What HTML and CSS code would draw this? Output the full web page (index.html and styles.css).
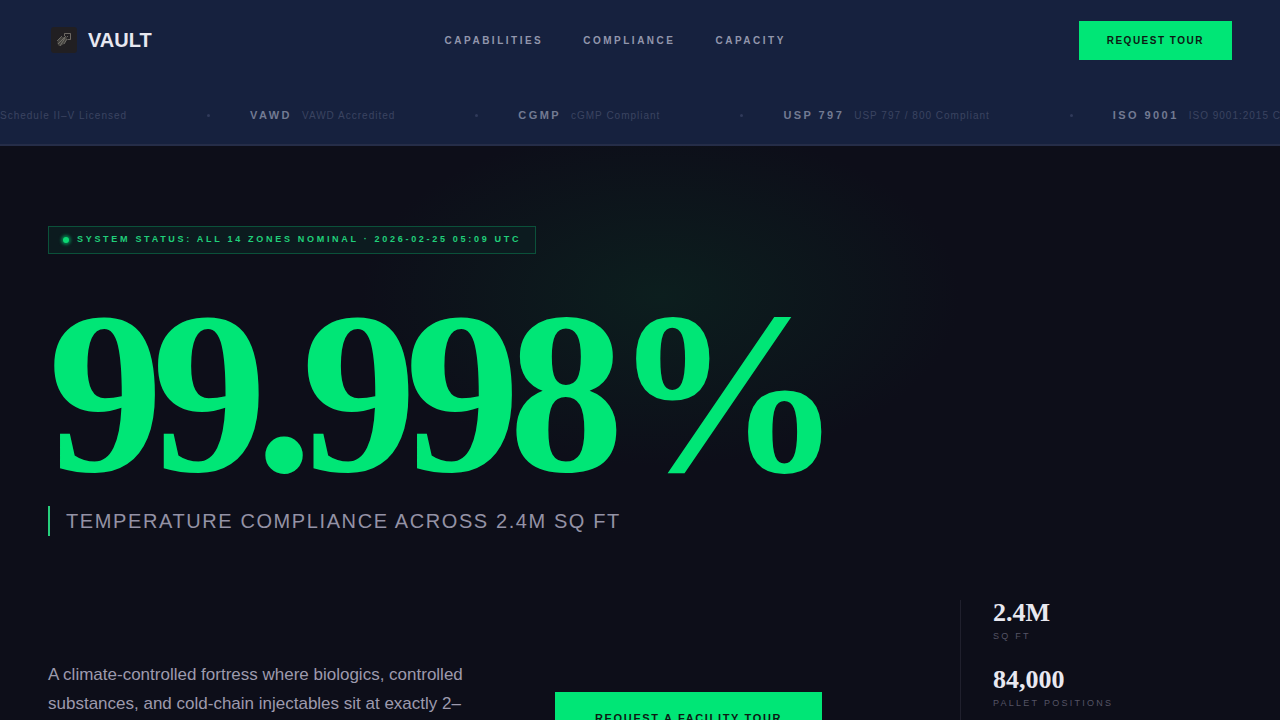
FILE: index.html
```html
<!DOCTYPE html>
<html lang="en">
<head>
<meta charset="utf-8">
<meta name="viewport" content="width=device-width, initial-scale=1">
<title>VAULT</title>
<link rel="stylesheet" href="styles.css">
</head>
<body>
<header class="site-header">
  <div class="topbar">
    <a class="brand" href="#">
      <svg class="brand-mark" viewBox="0 0 28 28" aria-hidden="true">
        <rect x="1" y="1" width="26" height="26" rx="3" fill="#211f22"/>
        <path d="M7.500 18C7 13 11 9.500 17 11C17 16 13 20 9 20Z" fill="#45433f"/>
        <g fill="none" stroke="#85817a">
          <path d="M14.500 10v-2.500h6v6h-3" opacity=".75"/>
          <path d="M17.500 10v1" opacity=".7"/>
          <path d="M7 15l5-5M8 18l8-8M10 20l5-8M14 18l3-5" opacity=".7"/>
        </g>
      </svg>
      <span>VAULT</span>
    </a>
    <nav class="links" aria-label="Main">
      <a href="#">CAPABILITIES</a>
      <a href="#">COMPLIANCE</a>
      <a href="#">CAPACITY</a>
    </nav>
    <button class="tour" type="button">REQUEST TOUR</button>
  </div>
  <div class="ticker">
    <ul class="ticker-track">
      <li><span>Schedule II–V Licensed</span></li>
      <li><strong>VAWD</strong><span>VAWD Accredited</span></li>
      <li><strong>CGMP</strong><span>cGMP Compliant</span></li>
      <li><strong>USP 797</strong><span>USP 797 / 800 Compliant</span></li>
      <li><strong>ISO 9001</strong><span>ISO 9001:2015 Certified</span></li>
    </ul>
  </div>
</header>
<main class="hero">
  <p class="status"><i class="status-dot"></i>SYSTEM STATUS: ALL 14 ZONES NOMINAL · 2026-02-25 05:09 UTC</p>
  <h1 class="figure">99.998%</h1>
  <p class="caption">TEMPERATURE COMPLIANCE ACROSS 2.4M SQ FT</p>
  <div class="details">
    <p class="intro">A climate-controlled fortress where biologics, controlled substances, and cold-chain injectables sit at exactly 2–8°C.</p>
    <button class="cta" type="button">REQUEST A FACILITY TOUR</button>
    <dl class="stats">
      <div><dd>2.4M</dd><dt>SQ FT</dt></div>
      <div><dd>84,000</dd><dt>PALLET POSITIONS</dt></div>
    </dl>
  </div>
</main>
</body>
</html>
```
FILE: styles.css
```css
* { box-sizing: border-box; margin: 0; padding: 0; }
html { height: 100%; overflow: hidden; }
body {
  height: 100%;
  overflow: hidden;
  background: #0d0e19;
  color: #e8e8f0;
  font-family: "Liberation Sans", Arial, sans-serif;
}
a { color: inherit; text-decoration: none; }
button { border: 0; background: #00e676; color: #0d1a14; font-family: inherit; font-weight: 700; cursor: pointer; }

.site-header { background: #16213e; border-bottom: 2px solid #252d48; }
.topbar {
  display: flex;
  justify-content: space-between;
  align-items: center;
  height: 80px;
  padding: 0 48px;
}
.brand { display: flex; align-items: center; gap: 10px; padding-left: 2px; font-size: 20px; font-weight: 700; }
.brand-mark { width: 28px; height: 28px; }
.links { display: flex; gap: 40px; color: #9296ac; font-size: 10px; font-weight: 700; letter-spacing: 0.25em; }
.tour { padding: 14px 28px; font-size: 10px; line-height: 11px; letter-spacing: 0.15em; }

.ticker { height: 64px; padding-top: 28px; overflow: hidden; }
.ticker-track { display: flex; list-style: none; line-height: 14px; white-space: nowrap; }
.ticker-track li { display: flex; flex: none; align-items: baseline; gap: 10px; }
.ticker-track li:not(:last-child)::after {
  content: "";
  align-self: center;
  width: 3px;
  height: 3px;
  margin: 0 40px 0 70px;
  border-radius: 50%;
  background: #303a5a;
}
.ticker-track strong { color: #727a92; font-size: 11px; letter-spacing: 0.22em; }
.ticker-track span { color: #3b4461; font-size: 10px; line-height: 15px; letter-spacing: 0.1em; }

.hero {
  padding: 80px 48px 0;
  min-height: 720px;
  background: radial-gradient(ellipse 300px 170px at 660px 150px, #0c1e1e, transparent);
}
.status {
  display: flex;
  align-items: center;
  width: fit-content;
  height: 28px;
  padding: 0 14px 2px 12px;
  border: 1px solid #0b513a;
  background: #0c1b1f;
  color: #20cf7a;
  font-size: 9px;
  font-weight: 700;
  letter-spacing: 0.3em;
  white-space: nowrap;
}
.status-dot { width: 6px; height: 6px; margin: 2px 8px 0 2px; border-radius: 50%; background: #0cd873; box-shadow: 0 0 3px 2px #067448; }
.figure {
  margin-top: 42px;
  color: #00e676;
  font-family: "Liberation Serif", "Times New Roman", serif;
  font-size: 18vw;
  font-weight: 700;
  line-height: 196px;
  letter-spacing: -0.05em;
}
.caption {
  margin-top: 14px;
  padding-left: 16px;
  border-left: 2px solid #26cf7c;
  color: #9492a5;
  font-size: 20px;
  line-height: 30px;
  letter-spacing: 0.08em;
}
.details { display: grid; grid-template-columns: 443fr 341fr 272fr; column-gap: 64px; margin-top: 64px; }
.intro { margin-top: 60px; color: #9d9aad; font-size: 17px; line-height: 29px; }
.cta { justify-self: start; align-self: start; margin-top: 92px; padding: 20px 40px; font-size: 11px; line-height: 13px; letter-spacing: 0.15em; white-space: nowrap; }
.stats { display: grid; align-content: start; gap: 25px; padding: 0 0 40px 32px; border-left: 1px solid #20202d; }
.stats div { display: flex; flex-direction: column; }
.stats dd { font-family: "Liberation Serif", "Times New Roman", serif; font-size: 26px; font-weight: 700; line-height: 26px; }
.stats dt { margin-top: 5px; color: #555465; font-size: 9px; line-height: 11px; letter-spacing: 0.25em; }
```
